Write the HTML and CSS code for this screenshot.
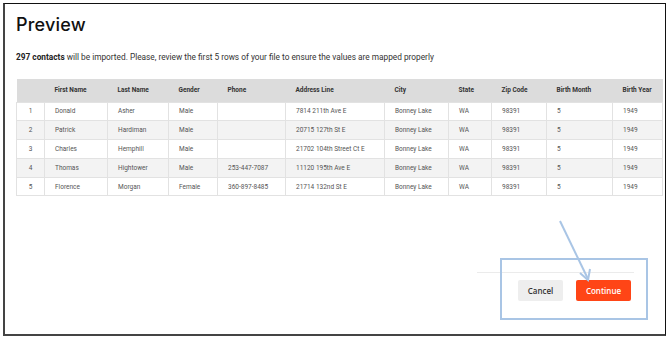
FILE: index.html
```html
<!DOCTYPE html>
<html>
<head>
<meta charset="utf-8">
<link rel="stylesheet" href="styles.css">
</head>
<body>
<div class="frame">
  <h1 class="title">Preview</h1>
  <p class="intro"><b>297 contacts</b> will be imported. Please, review the first 5 rows of your file to ensure the values are mapped properly</p>
  <div class="table-wrap">
    <table class="grid">
      <colgroup>
        <col style="width:28px"><col style="width:63px"><col style="width:61px"><col style="width:49px"><col style="width:68px"><col style="width:99px"><col style="width:64px"><col style="width:43px"><col style="width:55px"><col style="width:66px"><col style="width:50px">
      </colgroup>
      <thead>
        <tr><th></th><th>First Name</th><th>Last Name</th><th>Gender</th><th>Phone</th><th>Address Line</th><th>City</th><th>State</th><th>Zip Code</th><th>Birth Month</th><th>Birth Year</th></tr>
      </thead>
      <tbody>
        <tr><td class="num">1</td><td>Donald</td><td>Asher</td><td>Male</td><td></td><td>7814 211th Ave E</td><td>Bonney Lake</td><td>WA</td><td>98391</td><td>5</td><td>1949</td></tr>
        <tr><td class="num">2</td><td>Patrick</td><td>Hardiman</td><td>Male</td><td></td><td>20715 127th St E</td><td>Bonney Lake</td><td>WA</td><td>98391</td><td>5</td><td>1949</td></tr>
        <tr><td class="num">3</td><td>Charles</td><td>Hemphill</td><td>Male</td><td></td><td>21702 104th Street Ct E</td><td>Bonney Lake</td><td>WA</td><td>98391</td><td>5</td><td>1949</td></tr>
        <tr><td class="num">4</td><td>Thomas</td><td>Hightower</td><td>Male</td><td>253-447-7087</td><td>11120 195th Ave E</td><td>Bonney Lake</td><td>WA</td><td>98391</td><td>5</td><td>1949</td></tr>
        <tr><td class="num">5</td><td>Florence</td><td>Morgan</td><td>Female</td><td>360-897-8485</td><td>21714 132nd St E</td><td>Bonney Lake</td><td>WA</td><td>98391</td><td>5</td><td>1949</td></tr>
      </tbody>
    </table>
  </div>
  <div class="footer">
    <div class="divider"></div>
    <div class="actions">
      <button class="btn btn-cancel">Cancel</button>
      <button class="btn btn-continue">Continue</button>
    </div>
  </div>
  <div class="highlight"></div>
  <svg class="arrow" width="60" height="80" viewBox="0 0 60 80">
    <line x1="4" y1="2" x2="32" y2="60" stroke="#a9c5e5" stroke-width="2"/>
    <polyline points="24,54 32,61 34,50" fill="none" stroke="#a9c5e5" stroke-width="2"/>
  </svg>
</div>
</body>
</html>
```
FILE: styles.css
```css
* { box-sizing: border-box; }
html, body { margin: 0; padding: 0; background: #fff; }
body { width: 671px; height: 340px; overflow: hidden; font-family: Roboto, "Liberation Sans", sans-serif; }

.frame {
  position: relative;
  margin: 3px 0 0 3px;
  width: 663px;
  height: 333px;
  border-top: 1px solid #111;
  border-right: 1px solid #111;
  border-left: 2px solid #444;
  border-bottom: 2px solid #444;
  padding: 0 0 0 11px;
  overflow: hidden;
}

.title {
  margin: 9px 0 0 0;
  font-family: Inter, "Open Sans", sans-serif;
  font-weight: 500;
  font-size: 18px;
  line-height: 24px;
  color: #111;
  letter-spacing: 0.2px;
}

.intro {
  margin: 14px 0 0 0;
  font-size: 8.3px;
  line-height: 12px;
  color: #333;
}
.intro b { font-weight: 700; color: #222; }

.table-wrap { margin-top: 16px; width: 646px; }

.grid {
  table-layout: fixed;
  width: 646px;
  border-collapse: collapse;
  font-size: 6.5px;
  color: #555;
}
.grid th {
  background: #dcdcdc;
  height: 23px;
  text-align: left;
  padding: 0 0 0 10px;
  font-weight: 700;
  color: #333;
  white-space: nowrap;
  overflow: hidden;
}
.grid td {
  height: 18.8px;
  padding: 0 0 0 10px;
  border: 1px solid #e2e2e2;
  white-space: nowrap;
  overflow: hidden;
}
.grid td.num { text-align: center; padding: 0; }
.grid tbody tr:nth-child(even) td { background: #f3f3f3; }

.footer {
  position: absolute;
  left: 472px;
  top: 268px;
  width: 157px;
}
.divider { height: 1px; background: #ebebeb; }
.actions {
  display: flex;
  justify-content: flex-end;
  gap: 13px;
  margin-top: 7px;
  padding-right: 3px;
}
.btn {
  height: 21px;
  border: none;
  border-radius: 2px;
  font-family: "Open Sans", sans-serif;
  font-size: 8px;
  font-weight: 600;
  padding: 0;
  cursor: pointer;
}
.btn-cancel { width: 45px; background: #eeeeee; color: #333; }
.btn-continue { width: 55px; background: #ff4516; color: #fff; }

.highlight {
  position: absolute;
  left: 495px;
  top: 254px;
  width: 148px;
  height: 62px;
  border: 2px solid #a9c5e5;
}
.arrow {
  position: absolute;
  left: 551px;
  top: 215px;
}
```
